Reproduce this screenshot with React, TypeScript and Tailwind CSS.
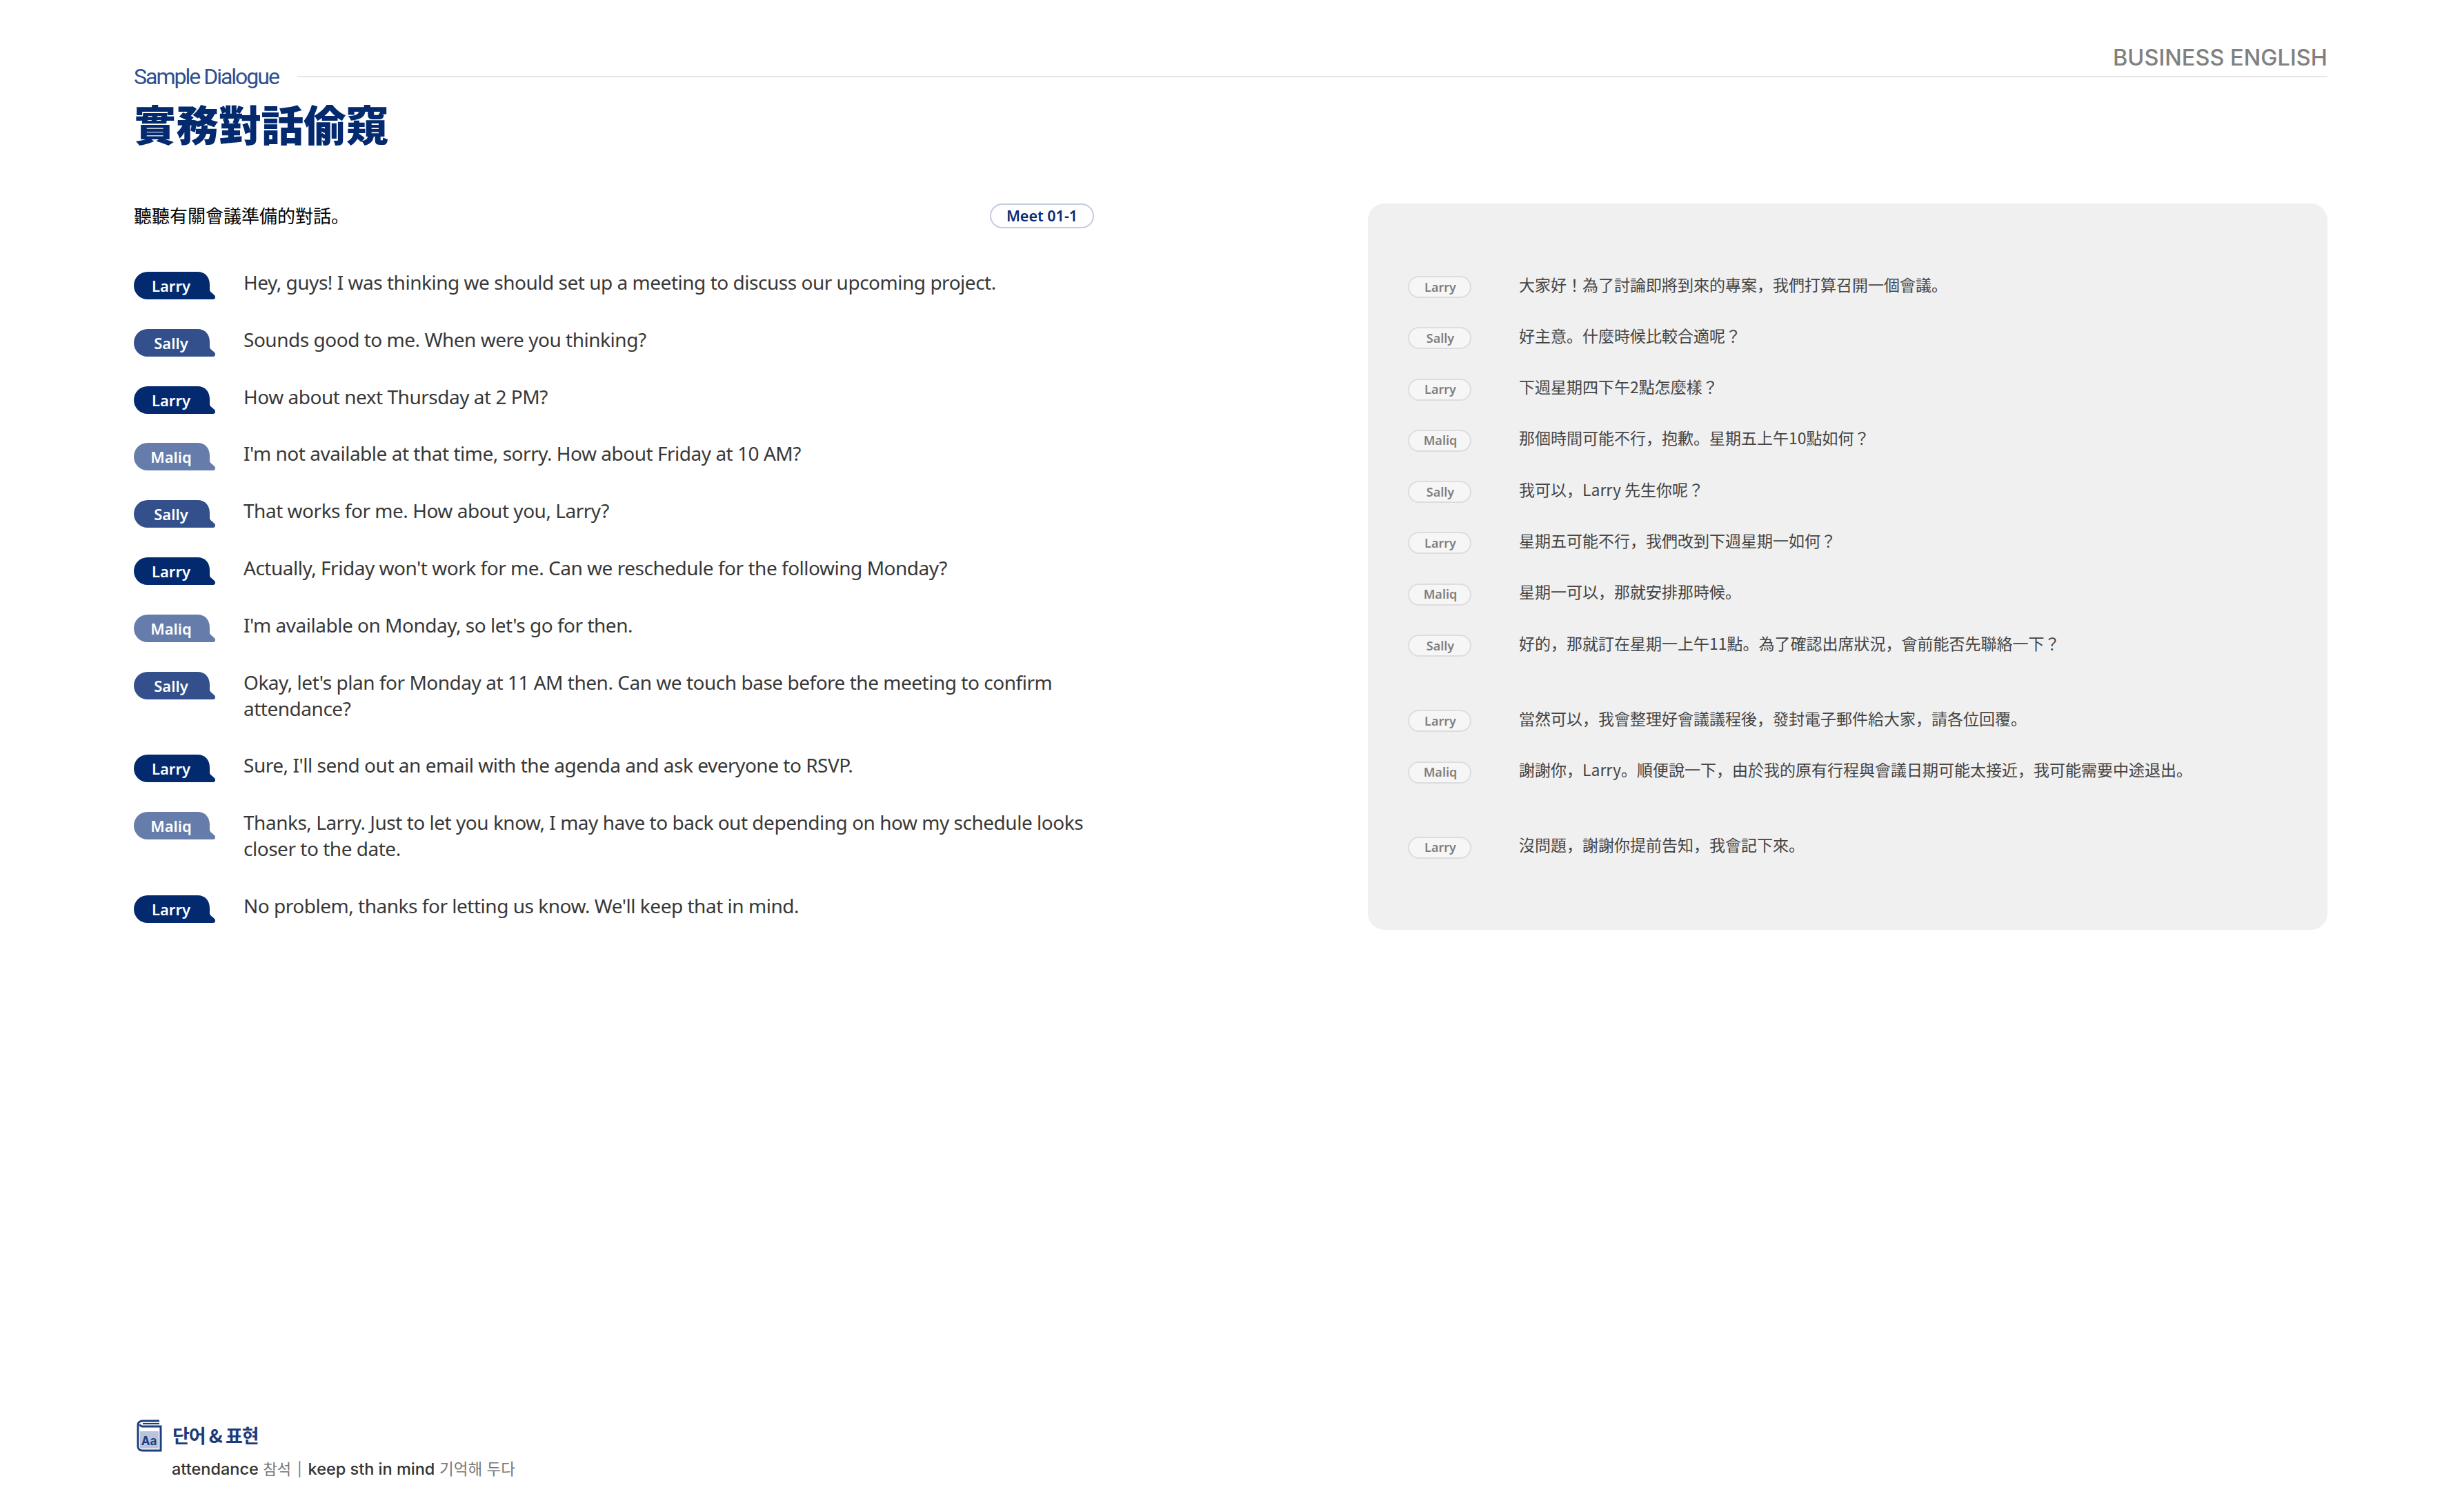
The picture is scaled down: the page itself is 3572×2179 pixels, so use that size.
const cjk = "font-['Noto_Sans_CJK_JP','Noto_Sans',sans-serif]";

const bubbleColors: Record<string, string> = {
  Larry: "text-[#03296f]",
  Sally: "text-[#33508c]",
  Maliq: "text-[#667dab]",
};

const dialogue = [
  { who: "Larry", line: "Hey, guys! I was thinking we should set up a meeting to discuss our upcoming project." },
  { who: "Sally", line: "Sounds good to me. When were you thinking?" },
  { who: "Larry", line: "How about next Thursday at 2 PM?" },
  { who: "Maliq", line: "I'm not available at that time, sorry. How about Friday at 10 AM?" },
  { who: "Sally", line: "That works for me. How about you, Larry?" },
  { who: "Larry", line: "Actually, Friday won't work for me. Can we reschedule for the following Monday?" },
  { who: "Maliq", line: "I'm available on Monday, so let's go for then." },
  { who: "Sally", line: "Okay, let's plan for Monday at 11 AM then. Can we touch base before the meeting to confirm attendance?" },
  { who: "Larry", line: "Sure, I'll send out an email with the agenda and ask everyone to RSVP." },
  { who: "Maliq", line: "Thanks, Larry. Just to let you know, I may have to back out depending on how my schedule looks closer to the date." },
  { who: "Larry", line: "No problem, thanks for letting us know. We'll keep that in mind." },
];

const translation = [
  { who: "Larry", line: "大家好！為了討論即將到來的專案，我們打算召開一個會議。" },
  { who: "Sally", line: "好主意。什麼時候比較合適呢？" },
  { who: "Larry", line: "下週星期四下午2點怎麼樣？" },
  { who: "Maliq", line: "那個時間可能不行，抱歉。星期五上午10點如何？" },
  { who: "Sally", line: "我可以，Larry 先生你呢？" },
  { who: "Larry", line: "星期五可能不行，我們改到下週星期一如何？" },
  { who: "Maliq", line: "星期一可以，那就安排那時候。" },
  { who: "Sally", line: "好的，那就訂在星期一上午11點。為了確認出席狀況，會前能否先聯絡一下？" },
  { who: "Larry", line: "當然可以，我會整理好會議議程後，發封電子郵件給大家，請各位回覆。", gap: true },
  { who: "Maliq", line: "謝謝你，Larry。順便說一下，由於我的原有行程與會議日期可能太接近，我可能需要中途退出。" },
  { who: "Larry", line: "沒問題，謝謝你提前告知，我會記下來。", gap: true },
];

function Bubble({ who }: { who: string }) {
  return (
    <div className={`relative w-[119px] h-[41px] mt-[4px] -mb-[7px] shrink-0 ${bubbleColors[who]}`}>
      <svg width="119" height="41" viewBox="0 0 119 41" className="absolute inset-0">
        <path
          d="M20 0H92C104 0 110 8 110 19V26C110 29 113 30 117 34C119 37 118 40 115 40H20A20 20 0 0 1 20 0Z"
          fill="currentColor"
        />
      </svg>
      <span className="absolute inset-y-0 left-0 w-[108px] flex items-center justify-center text-white text-[22px] font-semibold font-['Noto_Sans',sans-serif]">
        {who}
      </span>
    </div>
  );
}

function BookIcon() {
  return (
    <svg width="37" height="47" viewBox="0 0 37 47" className="shrink-0">
      <path d="M33 2H9C5 2 2 4 2 8V39C2 43 5 45 9 45H35V10H9C6 10 5 8 5 7" fill="none" stroke="#1d3f80" strokeWidth="3" />
      <path d="M33 6H9" stroke="#1d3f80" strokeWidth="2" />
      <rect x="5" y="17" width="27" height="25" fill="#b9c4dc" />
      <text x="18" y="37" textAnchor="middle" fontSize="17" fontWeight="700" fill="#1d3f80" fontFamily="Inter, sans-serif">
        Aa
      </text>
    </svg>
  );
}

export default function App() {
  return (
    <div className={`h-[2179px] bg-white pl-[194px] pr-[198px] pt-[64px] pb-[32px] flex flex-col ${cjk}`}>
      <header>
        <div className="flex items-start">
          <span className="mt-[27px] text-[32px] leading-[40px] tracking-[-2px] text-[#2f4f8f] font-['Roboto',sans-serif]">
            Sample Dialogue
          </span>
          <div className="flex-1 ml-[27px] h-[48px] border-b-2 border-[#e5e5e5] flex justify-end items-start">
            <span className="text-[32.5px] leading-[40px] font-medium text-[#808080] font-['Inter',sans-serif]">
              BUSINESS ENGLISH
            </span>
          </div>
        </div>
        <h1 className="mt-[18px] text-[61.5px] leading-[60px] font-black text-[#03296f]">實務對話偷窺</h1>
      </header>

      <main className="mt-[86px] flex gap-[397px] items-start">
        <section className="w-[1392px] shrink-0">
          <div className="flex justify-between items-center h-[36px]">
            <p className="-mt-[4px] text-[26px] text-black">聽聽有關會議準備的對話。</p>
            <span className="w-[151px] h-[36px] rounded-full border-2 border-[#c5cce3] flex items-center justify-center text-[21.5px] font-semibold text-[#0b2a6f] font-['Noto_Sans',sans-serif]">
              Meet 01-1
            </span>
          </div>
          <div className="mt-[59px] flex flex-col gap-[44.8px]">
            {dialogue.map((row, i) => (
              <div key={i} className="flex items-start gap-[40px]">
                <Bubble who={row.who} />
                <p className="text-[28px] leading-[38px] tracking-[-0.48px] text-[#383838] font-['Noto_Sans',sans-serif]">{row.line}</p>
              </div>
            ))}
          </div>
        </section>

        <section className="flex-1 h-[1053px] rounded-[24px] bg-[#f0f0f0] pt-[105px] pl-[58px] pr-[40px]">
          <div className="flex flex-col gap-[42.3px]">
            {translation.map((row, i) => (
              <div key={i} className={`flex items-center gap-[69px] h-[32px] ${row.gap ? "mt-[35px]" : ""}`}>
                <span className="w-[92px] h-[32px] shrink-0 rounded-full bg-[#f6f6f6] border-2 border-[#dddddd] pl-[2px] flex items-center justify-center text-[18px] font-semibold text-[#808080] font-['Noto_Sans',sans-serif]">
                  {row.who}
                </span>
                <p className="-mt-[9px] text-[23px] leading-[32px] text-[#444444]">{row.line}</p>
              </div>
            ))}
          </div>
        </section>
      </main>

      <footer className="mt-auto">
        <div className="flex items-center gap-[15px] ml-[4px]">
          <BookIcon />
          <span className="text-[27px] font-bold text-[#1d3a7a] font-['Noto_Sans_CJK_KR',sans-serif] tracking-[-1px]">단어 &amp; 표현</span>
        </div>
        <p className="ml-[55px] mt-[8px] text-[23.5px] leading-[34px] text-[#777777] font-['Inter','Noto_Sans_CJK_KR',sans-serif]">
          <span className="font-medium text-[#333333]">attendance</span> <span className="text-[22px]">참석</span>
          <span className="mx-[9px] text-[20px] align-[1px]">|</span>
          <span className="font-medium text-[#333333]">keep sth in mind</span> <span className="text-[22.5px]">기억해 두다</span>
        </p>
      </footer>
    </div>
  );
}
